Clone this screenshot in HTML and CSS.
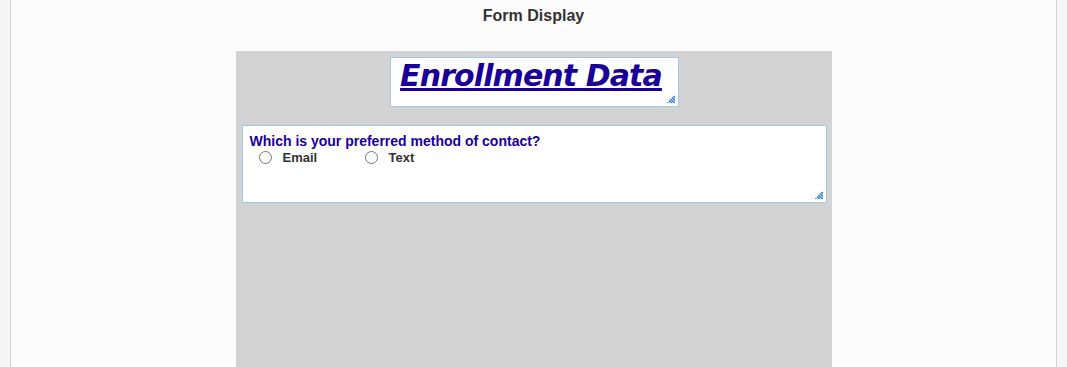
FILE: index.html
```html
<!DOCTYPE html>
<html>
<head>
<meta charset="utf-8">
<link rel="stylesheet" href="styles.css">
</head>
<body>
<div class="page">
  <h1 class="page-title">Form Display</h1>
  <div class="panel">
    <div class="title-box grip">
      <span class="title-text">Enrollment Data</span>
    </div>
    <div class="question-box grip">
      <div class="question">Which is your preferred method of contact?</div>
      <div class="options">
        <label class="option"><input type="radio" name="contact"><span>Email</span></label>
        <label class="option"><input type="radio" name="contact"><span>Text</span></label>
      </div>
    </div>
  </div>
</div>
</body>
</html>
```

FILE: styles.css
```css
html, body {
  margin: 0;
  padding: 0;
  height: 100%;
}
body {
  background: #f5f5f5;
  font-family: "Liberation Sans", Arial, sans-serif;
}
.page {
  margin: 0 10px;
  min-height: 100%;
  background: #fcfcfc;
  border-left: 1px solid #d4d4d4;
  border-right: 1px solid #d4d4d4;
  display: flex;
  flex-direction: column;
  align-items: center;
}
.page-title {
  margin: 0;
  padding-top: 7px;
  height: 51px;
  box-sizing: border-box;
  font-size: 16px;
  font-weight: bold;
  color: #333;
  line-height: 17px;
}
.panel {
  width: 596px;
  flex: 1;
  background: #d3d3d3;
  padding-top: 6px;
  display: flex;
  flex-direction: column;
  align-items: center;
}
.grip {
  position: relative;
  background: #fff;
  border: 1px solid #9fcbe8;
  box-sizing: border-box;
}
.grip::after {
  content: "";
  position: absolute;
  right: 3px;
  bottom: 3px;
  width: 8px;
  height: 8px;
  background:
    repeating-linear-gradient(45deg, transparent 0 1.4px, rgba(255,255,255,0.7) 1.4px 2.2px),
    linear-gradient(135deg, transparent 50%, #3a8ee6 50%);
}
.title-box {
  width: 289px;
  height: 50px;
  display: flex;
  justify-content: center;
  padding-top: 1px;
  margin-left: 1px;
}
.title-text {
  font-family: "DejaVu Sans", Verdana, sans-serif;
  font-weight: bold;
  font-style: italic;
  font-size: 30px;
  line-height: 34px;
  color: #1a0099;
  text-decoration: underline;
  text-decoration-thickness: 3px;
  text-underline-offset: 2px;
  letter-spacing: -0.9px;
  margin-left: -6px;
}
.question-box {
  margin-top: 18px;
  width: 585px;
  height: 78px;
  align-self: flex-start;
  margin-left: 6px;
  padding: 7px 7px;
}
.question {
  font-size: 14px;
  font-weight: bold;
  color: #1a0099;
  line-height: 16px;
}
.options {
  display: flex;
  padding-left: 9px;
}
.option {
  display: flex;
  align-items: center;
  width: 106px;
  font-size: 13px;
  font-weight: bold;
  color: #333;
  height: 17px;
}
.option input {
  margin: 0 11px 0 0;
  width: 13px;
  height: 13px;
}
```
